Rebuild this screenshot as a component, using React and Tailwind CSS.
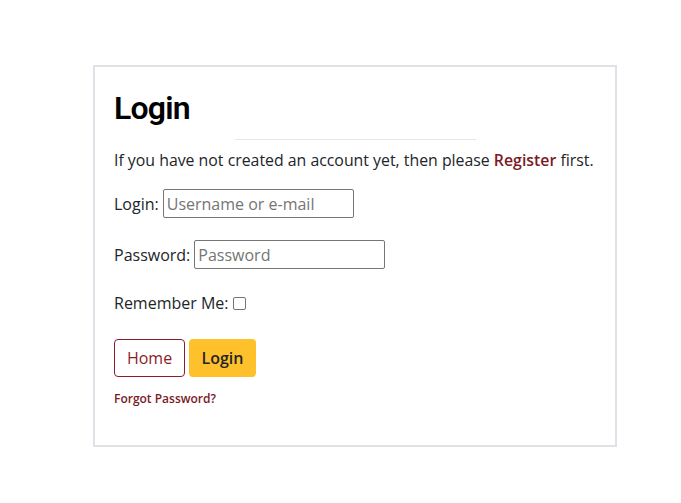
export default function App() {
  return (
    <div className="min-h-[503px] bg-white pt-[65px] pl-[93px]" style={{ fontFamily: '"Open Sans", "Liberation Sans", sans-serif' }}>
      <div className="w-[524px] h-[382px] border-2 border-[#dee2e6] px-[19px] pt-[22px] text-[#212529]">
        <h1 className="text-[32px] font-semibold leading-[1.2] text-black m-0 tracking-[-0.8px]" style={{ fontFamily: 'Roboto, "Open Sans", sans-serif' }}>Login</h1>
        <hr className="w-1/2 mx-auto mt-[12px] mb-[8px] border-0 border-t border-[#e3e6ea]" />
        <p className="text-[15.85px] leading-6 whitespace-nowrap">
          If you have not created an account yet, then please{" "}
          <a className="text-[#7b1a26] font-semibold">Register</a> first.
        </p>
        <div className="mt-[17px] flex items-center text-[16px]">
          <span>Login:</span>
          <input
            className="ml-[4px] w-[191px] h-[29px] border border-[#767676] rounded-[2px] px-[3px] text-[16px] placeholder:text-[#757575] outline-none"
            placeholder="Username or e-mail"
          />
        </div>
        <div className="mt-[22px] flex items-center text-[16px]">
          <span>Password:</span>
          <input
            className="ml-[4px] w-[191px] h-[29px] border border-[#767676] rounded-[2px] px-[3px] text-[16px] placeholder:text-[#757575] outline-none"
            placeholder="Password"
          />
        </div>
        <div className="mt-[22px] flex items-center text-[16px]">
          <span>Remember Me:</span>
          <span className="ml-[4px] w-[13px] h-[13px] border border-[#767676] rounded-[2px] bg-white" />
        </div>
        <div className="mt-[24px] flex gap-[4px]">
          <button className="h-[38px] w-[71px] border border-[#8b1c2a] rounded-[4px] text-[#8b1c2a] text-[16px] bg-white">
            Home
          </button>
          <button className="h-[38px] w-[67px] rounded-[4px] bg-[#ffc12b] text-[#212529] text-[16px] font-semibold">
            Login
          </button>
        </div>
        <div className="mt-[13px] text-[12px] font-semibold text-[#7b1a26]">Forgot Password?</div>
      </div>
    </div>
  );
}
